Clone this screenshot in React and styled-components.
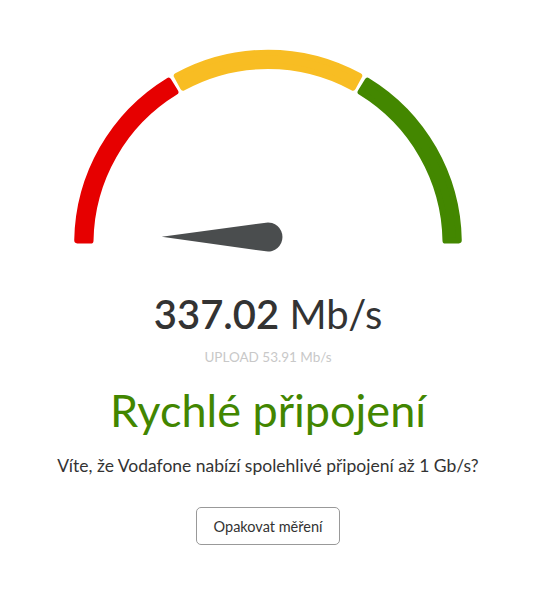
import React from 'react';
import styled, { createGlobalStyle } from 'styled-components';

const GlobalStyle = createGlobalStyle`
  body {
    margin: 0;
    background: #fff;
    font-family: Lato, "Open Sans", sans-serif;
  }
`;

const Page = styled.div`
  display: flex;
  flex-direction: column;
  align-items: center;
  padding-top: 40px;
  color: #333;
`;

const GaugeSvg = styled.svg`
  display: block;
  width: 400px;
  height: 220px;
`;

const Reading = styled.div`
  margin-top: 30px;
  font-size: 40px;
  line-height: 48px;
  color: #333;
  white-space: nowrap;
`;

const Value = styled.span`
  font-weight: 600;
`;

const Unit = styled.span`
  font-weight: 400;
`;

const Upload = styled.div`
  margin-top: 10px;
  font-size: 13.5px;
  line-height: 18px;
  color: #c8c8c8;
`;

const Verdict = styled.h1`
  margin: 16px 0 0;
  font-size: 45px;
  line-height: 56px;
  font-weight: 400;
  color: ${(p) => p.$tone};
`;

const Note = styled.p`
  margin: 16px 0 0;
  font-size: 17.5px;
  line-height: 24px;
  color: #333;
`;

const RetryButton = styled.button`
  margin-top: 29px;
  width: 144px;
  height: 38px;
  background: #fff;
  border: 1px solid #999;
  border-radius: 5px;
  font-family: Lato, "Open Sans", sans-serif;
  font-size: 14.5px;
  color: #333;
  cursor: pointer;
`;

const CX = 200;
const CY = 203.5;
const R_OUT = 193.8;
const R_IN = 174.5;
const ROUND = 3;

const pt = (r, deg) => {
  const a = (deg * Math.PI) / 180;
  return [CX + r * Math.cos(a), CY - r * Math.sin(a)];
};

// annulus sector, shrunk so the round-joined stroke brings it back to size
const sector = (from, to) => {
  const ro = R_OUT - ROUND;
  const ri = R_IN + ROUND;
  const d = (ROUND / ((R_OUT + R_IN) / 2)) * (180 / Math.PI);
  const a1 = from - d;
  const a2 = to + d;
  const [x1, y1] = pt(ro, a1);
  const [x2, y2] = pt(ro, a2);
  const [x3, y3] = pt(ri, a2);
  const [x4, y4] = pt(ri, a1);
  return `M${x1} ${y1} A${ro} ${ro} 0 0 1 ${x2} ${y2} L${x3} ${y3} A${ri} ${ri} 0 0 0 ${x4} ${y4} Z`;
};

const segments = [
  { from: 180, to: 120.5, color: '#e60000' },
  { from: 119.5, to: 60.5, color: '#f8bd23' },
  { from: 59.5, to: 0, color: '#438700' },
];

const Gauge = () => (
  <GaugeSvg viewBox="0 0 400 220">
    {segments.map((s) => (
      <path
        key={s.color}
        d={sector(s.from, s.to)}
        fill={s.color}
        stroke={s.color}
        strokeWidth={ROUND * 2}
        strokeLinejoin="round"
      />
    ))}
    <path
      d="M93.7 196.7 L198.03 182.63 A14.5 14.5 0 1 1 198.03 211.37 Z"
      fill="#4a4d4e"
    />
  </GaugeSvg>
);

export default function App() {
  return (
    <>
      <GlobalStyle />
      <Page>
        <Gauge />
        <Reading>
          <Value>337.02</Value> <Unit>Mb/s</Unit>
        </Reading>
        <Upload>UPLOAD 53.91 Mb/s</Upload>
        <Verdict $tone="#428600">Rychlé připojení</Verdict>
        <Note>Víte, že Vodafone nabízí spolehlivé připojení až 1 Gb/s?</Note>
        <RetryButton>Opakovat měření</RetryButton>
      </Page>
    </>
  );
}
